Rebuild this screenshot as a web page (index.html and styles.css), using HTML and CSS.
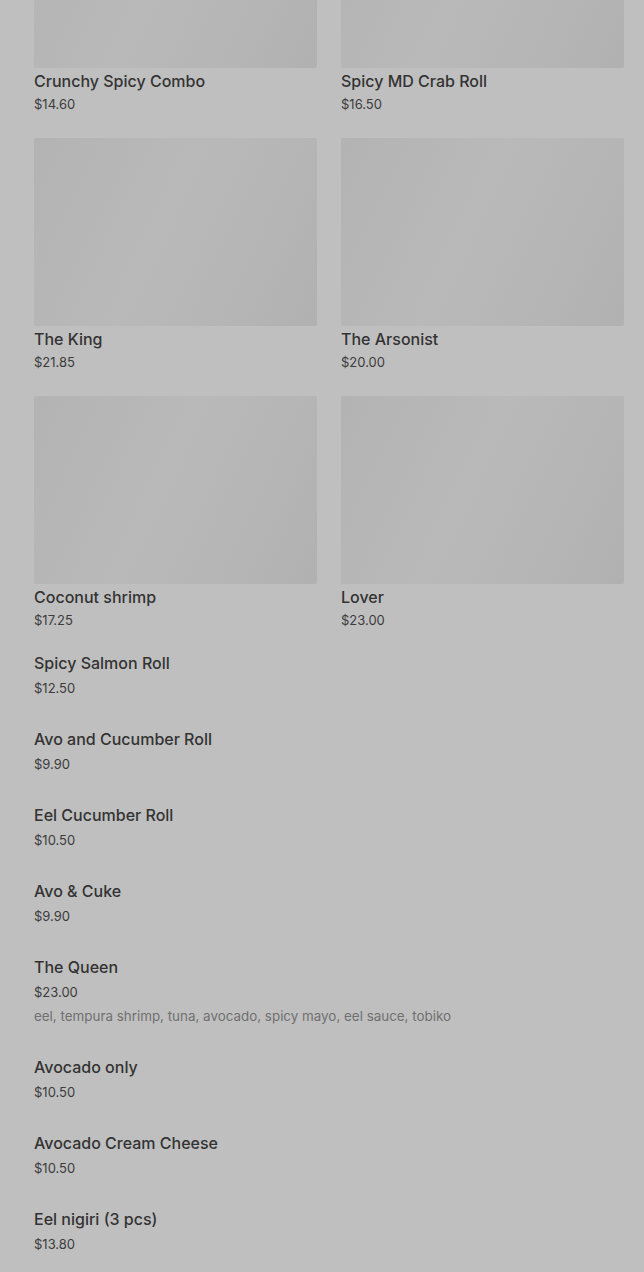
FILE: index.html
```html
<!DOCTYPE html>
<html lang="en">
<head>
    <meta charset="UTF-8">
    <meta name="viewport" content="width=device-width, initial-scale=1.0">
    <title>Sushi Menu</title>
    <link rel="stylesheet" href="styles.css">
</head>
<body>
    <div class="menu">
        <div class="grid">
            <div class="card">
                <div class="photo"></div>
                <h3>Crunchy Spicy Combo</h3>
                <p class="price">$14.60</p>
            </div>
            <div class="card">
                <div class="photo"></div>
                <h3>Spicy MD Crab Roll</h3>
                <p class="price">$16.50</p>
            </div>
            <div class="card">
                <div class="photo"></div>
                <h3>The King</h3>
                <p class="price">$21.85</p>
            </div>
            <div class="card">
                <div class="photo"></div>
                <h3>The Arsonist</h3>
                <p class="price">$20.00</p>
            </div>
            <div class="card">
                <div class="photo"></div>
                <h3>Coconut shrimp</h3>
                <p class="price">$17.25</p>
            </div>
            <div class="card">
                <div class="photo"></div>
                <h3>Lover</h3>
                <p class="price">$23.00</p>
            </div>
        </div>

        <div class="list">
            <div class="item">
                <h3>Spicy Salmon Roll</h3>
                <p class="price">$12.50</p>
            </div>
            <div class="item">
                <h3>Avo and Cucumber Roll</h3>
                <p class="price">$9.90</p>
            </div>
            <div class="item">
                <h3>Eel Cucumber Roll</h3>
                <p class="price">$10.50</p>
            </div>
            <div class="item">
                <h3>Avo &amp; Cuke</h3>
                <p class="price">$9.90</p>
            </div>
            <div class="item">
                <h3>The Queen</h3>
                <p class="price">$23.00</p>
                <p class="desc">eel, tempura shrimp, tuna, avocado, spicy mayo, eel sauce, tobiko</p>
            </div>
            <div class="item">
                <h3>Avocado only</h3>
                <p class="price">$10.50</p>
            </div>
            <div class="item">
                <h3>Avocado Cream Cheese</h3>
                <p class="price">$10.50</p>
            </div>
            <div class="item">
                <h3>Eel nigiri (3 pcs)</h3>
                <p class="price">$13.80</p>
            </div>
        </div>
    </div>
</body>
</html>
```

FILE: styles.css
```css
body {
    font-family: Inter, "Noto Sans", sans-serif;
    margin: 0;
    padding: 0;
    background-color: #bfbfbf;
    color: #333;
    overflow: hidden;
}
.menu {
    padding: 0 20px 0 34px;
}
.grid {
    display: grid;
    grid-template-columns: 1fr 1fr;
    column-gap: 24px;
    row-gap: 25px;
    margin-top: -120px;
    margin-bottom: 23px;
}
.photo {
    height: 188px;
    border-radius: 2px;
    background: linear-gradient(115deg, #b3b3b3 0%, #b9b9b9 45%, #b6b6b6 70%, #b1b1b1 100%);
}
h3 {
    margin: 3px 0 0;
    font-size: 16px;
    font-weight: 500;
    line-height: 20px;
    color: #333;
}
.price {
    margin: 4px 0 0;
    font-size: 13px;
    line-height: 18px;
    color: #3c3c3c;
}
.list {
    display: flex;
    flex-direction: column;
    gap: 31px;
}
.item h3 {
    margin: 0;
    line-height: 22px;
}
.item .price {
    margin-top: 5px;
}
.desc {
    margin: 6px 0 0;
    font-size: 13.4px;
    line-height: 18px;
    color: #707070;
}
```
